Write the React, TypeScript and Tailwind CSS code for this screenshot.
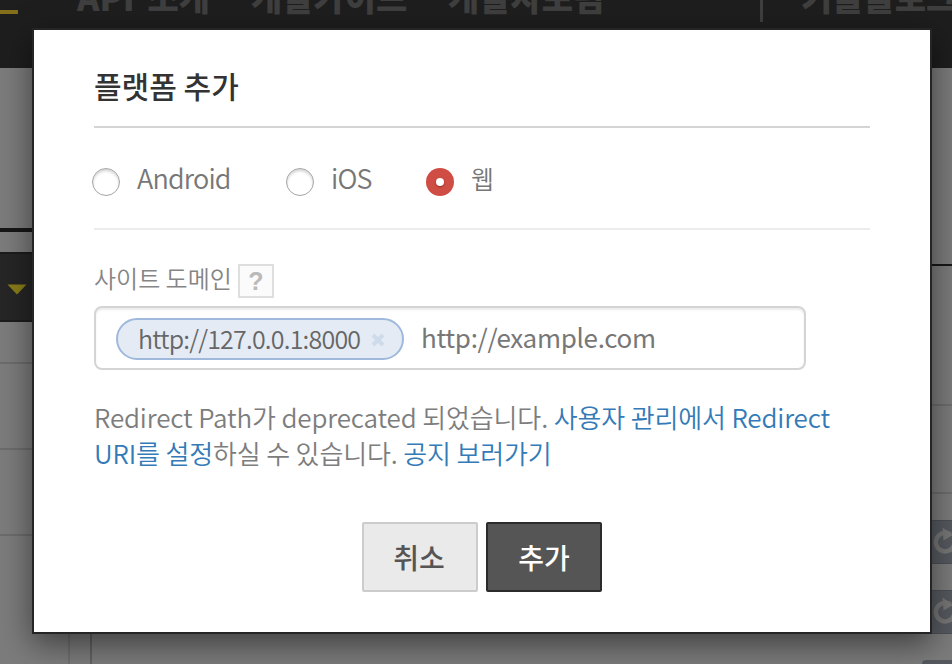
import React from "react";

function ReloadIcon() {
  return (
    <svg width="30" height="30" viewBox="0 0 30 30" className="shrink-0">
      <path d="M18.5 7.5A9.3 9.3 0 1 0 22 18" fill="none" stroke="#777" strokeWidth="4.4" />
      <path d="M10.5 0.5L21 8L11.5 13.5Z" fill="#777" />
    </svg>
  );
}

function Backdrop() {
  return (
    <div className="flex h-full flex-col bg-[#7c7c7c]">
      <header className="flex h-[68px] shrink-0 items-start overflow-hidden bg-[#1e1e1e] text-[34px] leading-[40px] font-black whitespace-nowrap text-[#3f3f3f]">
        <span className="mt-[10px] h-1 w-[18px] shrink-0 bg-[#84701a]" />
        <nav className="ml-[59px] -mt-[23px] flex">
          <span className="w-[174px] [word-spacing:5px]">API 소개</span>
          <span className="w-[197px]">개발가이드</span>
          <span className="w-[312px]">개발자포럼</span>
        </nav>
        <span className="h-[22px] w-[3px] shrink-0 bg-[#3f3f3f]" />
        <span className="-mt-[23px] ml-[38px]">기술블로그</span>
      </header>
      <div className="flex grow">
        <aside className="flex w-[70px] flex-col border-r-2 border-[#6f6f6f]">
          <div className="h-[164px] border-b-4 border-[#171717]" />
          <div className="mt-5 flex h-[70px] items-center border-y-2 border-[#1c1c1c] bg-[#262626] pl-[7px]">
            <svg width="20" height="11" viewBox="0 0 20 11" className="mt-1">
              <path d="M0.5 0.5H19.5L10 10.5Z" fill="#8a7e18" />
            </svg>
          </div>
          <div className="h-[42px] border-b-2 border-[#6c6c6c]" />
          <div className="h-[86px] border-b-2 border-[#6c6c6c]" />
          <div className="h-[86px] border-b-2 border-[#6c6c6c]" />
        </aside>
        <main className="ml-5 flex grow flex-col border-l-2 border-[#626262]">
          <div className="h-[198px] border-b-2 border-[#171717]" />
          <div className="h-[140px] border-b-2 border-[#6d6d6d]" />
          <div className="h-[88px] border-b-2 border-[#6d6d6d]" />
          <div className="mt-[26px] flex flex-col items-end gap-[26px]">
            <div className="flex h-11 w-[60px] items-center overflow-hidden border-y border-[#4c5055] bg-[#565a60] pl-[40px]">
              <ReloadIcon />
            </div>
            <div className="flex h-11 w-[60px] items-center overflow-hidden border-y border-[#4c5055] bg-[#565a60] pl-[40px]">
              <ReloadIcon />
            </div>
            <div className="h-1 w-[30px] rounded-tl-sm bg-[#565a60]" />
          </div>
        </main>
      </div>
    </div>
  );
}

function Radio({ checked = false }: { checked?: boolean }) {
  return checked ? (
    <span className="mt-[9px] flex size-7 items-center justify-center rounded-full bg-[#cf4d44]">
      <span className="size-2 rounded-full bg-white shadow-[0_1px_2px_rgba(90,0,0,0.5)]" />
    </span>
  ) : (
    <span className="mt-[9px] size-7 rounded-full border border-[#a6a6a6] bg-white shadow-[inset_0_2px_3px_rgba(0,0,0,0.18)]" />
  );
}

export default function App() {
  return (
    <div className="relative h-[664px] w-[952px] overflow-hidden font-['Noto_Sans_CJK_KR',sans-serif]">
      <Backdrop />
      <section className="absolute top-7 left-8 flex h-[606px] w-[900px] flex-col border-2 border-[#252525] bg-white px-[60px] text-[#777] shadow-[0_10px_30px_rgba(0,0,0,0.5)]">
        <h1 className="h-[98px] border-b-2 border-[#d4d4d4] pt-[33px] text-[30px] leading-[44px] font-medium text-[#333]">
          플랫폼 추가
        </h1>
        <div className="flex h-[102px] border-b-2 border-[#ececec] pt-[31px] text-[27px] leading-[38px] font-[350] tracking-[-0.8px]">
          <label className="-ml-[2px] flex w-[194px] gap-[17px]"><Radio />Android</label>
          <label className="flex w-[140px] gap-[17px]"><Radio />iOS</label>
          <label className="flex gap-[17px] text-[25px]"><Radio checked />웹</label>
        </div>
        <div className="mt-[31px] flex h-[45px] text-[24px] leading-[34px] font-[350] text-[#858585]">
          <span>사이트 도메인</span>
          <span className="mt-[3px] ml-[6px] flex h-[34px] w-9 items-center justify-center border-2 border-[#dedede] bg-[#fbfbfb] font-['Liberation_Sans',sans-serif] text-[25px] font-bold text-[#bababa]">
            ?
          </span>
        </div>
        <div className="flex h-16 w-[712px] shrink-0 items-start rounded-lg border-2 border-[#d4d4d4] pt-[10px] pl-5 shadow-[inset_0_2px_2px_rgba(0,0,0,0.08)]">
          <span className="flex h-[42px] w-[288px] items-start rounded-full border-2 border-[#9fb9dd] bg-[#e5ebf4] pl-5 text-[25px] leading-[36px] font-[350] text-[#666]">
            <span className="tracking-[-0.79px]">http://127.0.0.1:8000</span>
            <svg width="14" height="14" viewBox="0 0 14 14" className="mt-[13px] ml-[11px]">
              <path d="M2 2L12 12M12 2L2 12" stroke="#cddbea" strokeWidth="4" />
            </svg>
          </span>
          <span className="ml-[17px] text-[26px] leading-[38px] font-normal tracking-[-0.32px]">http://example.com</span>
        </div>
        <p className="mt-[29px] h-[75px] text-[26px] leading-9 font-[350] tracking-[-0.14px] whitespace-nowrap text-[#7d7d7d]">
          <span>Redirect Path가 deprecated 되었습니다. </span>
          <a className="text-[#337ab7]">사용자 관리에서 Redirect<br />URI를 설정</a>
          <span>하실 수 있습니다. </span>
          <a className="text-[#337ab7]">공지 보러가기</a>
        </p>
        <div className="mt-[48px] flex justify-center gap-2 text-[28px] font-medium">
          <button className="h-[70px] w-[116px] rounded-xs border-2 border-[#ccc] bg-[#eaeaea] pr-[2px] text-[#555]">취소</button>
          <button className="h-[70px] w-[116px] rounded-xs border-2 border-[#2b2b2b] bg-[#555] text-white">추가</button>
        </div>
      </section>
    </div>
  );
}
